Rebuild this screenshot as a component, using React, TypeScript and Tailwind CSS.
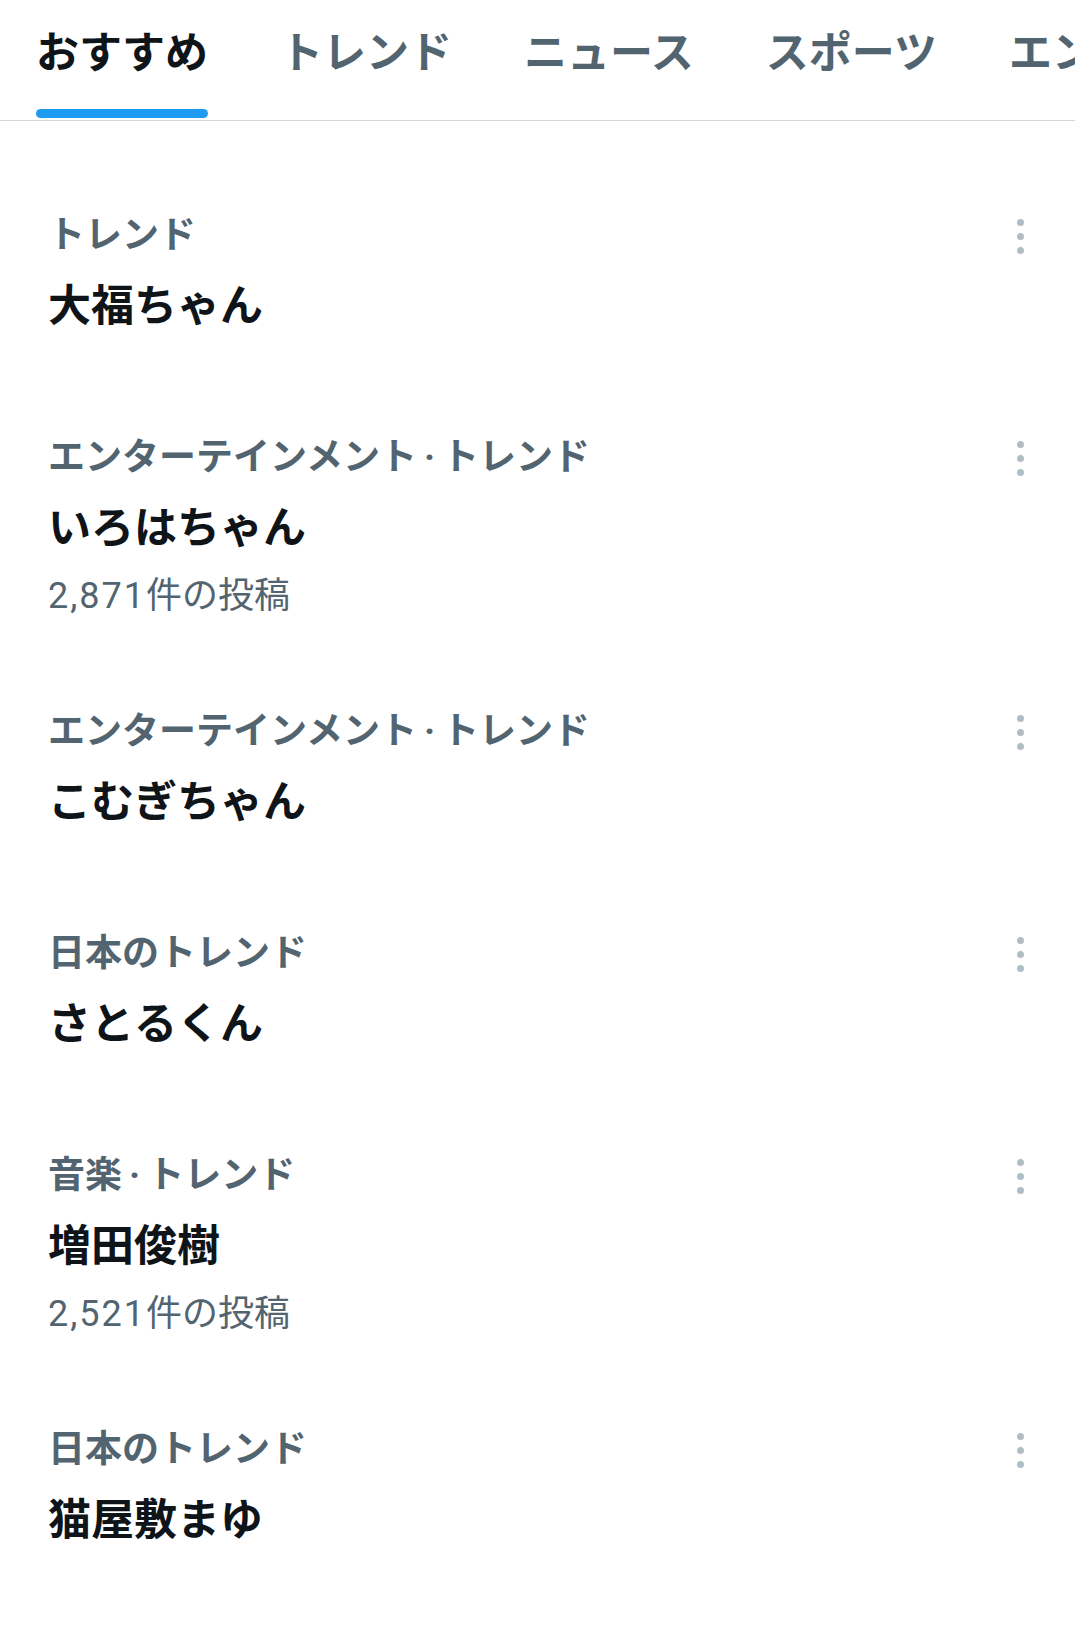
const jp = "font-['Roboto','Noto_Sans_CJK_JP',sans-serif]";

const tabs = ["おすすめ", "トレンド", "ニュース", "スポーツ", "エンターテイメント"];

type Trend = {
  category: string;
  title: string;
  count?: string;
};

const trends: Trend[] = [
  { category: "トレンド", title: "大福ちゃん" },
  { category: "エンターテインメント·トレンド", title: "いろはちゃん", count: "2,871" },
  { category: "エンターテインメント·トレンド", title: "こむぎちゃん" },
  { category: "日本のトレンド", title: "さとるくん" },
  { category: "音楽·トレンド", title: "増田俊樹", count: "2,521" },
  { category: "日本のトレンド", title: "猫屋敷まゆ" },
];

function MoreDots() {
  return (
    <div className="flex h-[48px] items-center pr-[51px]">
      <div className="flex flex-col gap-[7px]">
        <span className="block h-[7px] w-[7px] rounded-full bg-[#b0bdc5]" />
        <span className="block h-[7px] w-[7px] rounded-full bg-[#b0bdc5]" />
        <span className="block h-[7px] w-[7px] rounded-full bg-[#b0bdc5]" />
      </div>
    </div>
  );
}

function Category({ text }: { text: string }) {
  const parts = text.split("·");
  return (
    <p className="text-[37px] leading-[48px] font-bold text-[#536471] whitespace-nowrap">
      {parts.map((p, i) => (
        <span key={i}>
          {i > 0 && <span className="mx-[7px]">·</span>}
          {p}
        </span>
      ))}
    </p>
  );
}

function TrendRow({ item }: { item: Trend }) {
  return (
    <div className="flex items-start justify-between pl-[48px] pt-[46px] pb-[48px]">
      <div className="flex flex-col">
        <Category text={item.category} />
        <p className="mt-[12px] text-[43px] leading-[68px] font-bold text-[#0f1419]">
          {item.title}
        </p>
        {item.count && (
          <p className="mt-[16px] text-[36px] leading-[36px] text-[#536471]">
            <span className="tracking-[2px]">{item.count}</span>件の投稿
          </p>
        )}
      </div>
      <MoreDots />
    </div>
  );
}

export default function App() {
  return (
    <div className={`w-[1075px] min-h-[1650px] bg-white ${jp}`}>
      <nav className="flex h-[121px] overflow-hidden border-b border-[#cfd9de]">
        {tabs.map((t, i) => (
          <div key={t} className="flex shrink-0 flex-col px-[36px]">
            <span
              className={`pt-[25px] text-[43px] leading-[56px] font-bold whitespace-nowrap ${
                i === 0 ? "text-[#0f1419]" : "text-[#536471]"
              }`}
            >
              {t}
            </span>
            {i === 0 && (
              <span className="mt-auto mb-[2px] block h-[9px] rounded-full bg-[#1d9bf0]" />
            )}
          </div>
        ))}
      </nav>

      <div className="pt-[45px]">
        {trends.map((item, i) => (
          <TrendRow key={i} item={item} />
        ))}
      </div>
    </div>
  );
}
